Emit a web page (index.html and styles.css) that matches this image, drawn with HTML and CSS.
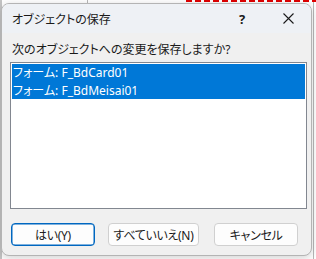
FILE: index.html
```html
<!DOCTYPE html>
<html lang="ja">
<head>
    <meta charset="UTF-8">
    <title>オブジェクトの保存</title>
    <link rel="stylesheet" href="styles.css">
</head>
<body>
    <div class="backdrop">
        <div class="sheet-line v1"></div>
        <div class="sheet-line v2"></div>
        <div class="sheet-line v3"></div>
        <div class="red-mark"></div>
    </div>

    <div class="dialog">
        <div class="titlebar">
            <span class="title">オブジェクトの保存</span>
            <div class="caption-buttons">
                <span class="cap-btn help">?</span>
                <span class="cap-btn close">
                    <svg width="11" height="11" viewBox="0 0 11 11">
                        <path d="M0.5 0.5 L10.5 10.5 M10.5 0.5 L0.5 10.5" stroke="#1a1a1a" stroke-width="1.1" fill="none"/>
                    </svg>
                </span>
            </div>
        </div>

        <p class="prompt">次のオブジェクトへの変更を保存しますか?</p>

        <ul class="object-list">
            <li class="selected">フォーム: F_BdCard01</li>
            <li class="selected">フォーム: F_BdMeisai01</li>
        </ul>

        <div class="actions">
            <button class="btn btn-default">はい(Y)</button>
            <button class="btn btn-wide">すべていいえ(N)</button>
            <button class="btn">キャンセル</button>
        </div>
    </div>
</body>
</html>
```

FILE: styles.css
```css
:root {
    --dialog-bg: #f0f0f0;
    --title-bg: #eef1f5;
    --select-color: #0078d7;
    --text-color: #1a1a1a;
}
html, body {
    margin: 0;
    padding: 0;
}
body {
    width: 316px;
    height: 259px;
    overflow: hidden;
    position: relative;
    background-color: #ffffff;
    font-family: "Noto Sans", "Noto Sans CJK JP", sans-serif;
    font-feature-settings: "palt";
    color: var(--text-color);
}

/* 後ろのシート (ダイアログの下に隠れている部分) */
.backdrop {
    position: absolute;
    inset: 0;
    background-color: #ffffff;
}
.sheet-line {
    position: absolute;
    top: 0;
    bottom: 0;
    width: 1px;
    background-color: #b8b8b8;
}
.v1 { left: 0; width: 2px; background-color: #c4c4c4; }
.v2 { left: 313px; }
.v3 { left: 87px; height: 4px; }
.red-mark {
    position: absolute;
    top: 0;
    left: 186px;
    right: 0;
    height: 2px;
    background: repeating-linear-gradient(90deg, #e00000 0 6px, transparent 6px 9px);
}

.dialog {
    position: absolute;
    top: 3px;
    left: 1px;
    width: 309px;
    height: 251px;
    border: 1px solid #b4b4b4;
    border-radius: 8px;
    background-color: var(--dialog-bg);
    box-shadow: 0 2px 8px rgba(0, 0, 0, 0.18);
    display: flex;
    flex-direction: column;
    overflow: hidden;
}

.titlebar {
    height: 29px;
    display: flex;
    align-items: center;
    justify-content: space-between;
    background-color: var(--title-bg);
    padding-left: 10px;
}
.title {
    font-size: 12px;
}
.caption-buttons {
    display: flex;
    height: 100%;
}
.cap-btn {
    width: 46px;
    height: 100%;
    display: flex;
    align-items: center;
    justify-content: center;
}
.help {
    font-size: 13px;
    font-weight: 700;
    font-family: "Noto Sans", sans-serif;
}

.prompt {
    margin: 9px 0 0 10px;
    font-size: 12px;
    line-height: 16px;
}

.object-list {
    list-style: none;
    margin: 4px 0 0 8px;
    padding: 1px;
    width: 293px;
    height: 143px;
    border: 1px solid #828790;
    background-color: #ffffff;
}
.object-list li {
    height: 17.5px;
    line-height: 17px;
    padding-left: 1px;
    font-size: 12px;
}
.object-list li.selected {
    background-color: var(--select-color);
    color: #ffffff;
}

.actions {
    display: flex;
    margin: 14px 0 0 9px;
}
.btn {
    height: 23px;
    width: 86px;
    margin-right: 13px;
    padding: 0;
    font-family: inherit;
    font-feature-settings: "palt";
    font-size: 12px;
    letter-spacing: -0.3px;
    color: var(--text-color);
    background-color: #fdfdfd;
    border: 1px solid #d0d0d0;
    border-radius: 4px;
}
.btn-wide {
    width: 94px;
    margin-right: 15px;
}
.btn-default {
    border-color: #0067c0;
    box-shadow: inset 0 0 0 0.5px #0067c0;
}
```
